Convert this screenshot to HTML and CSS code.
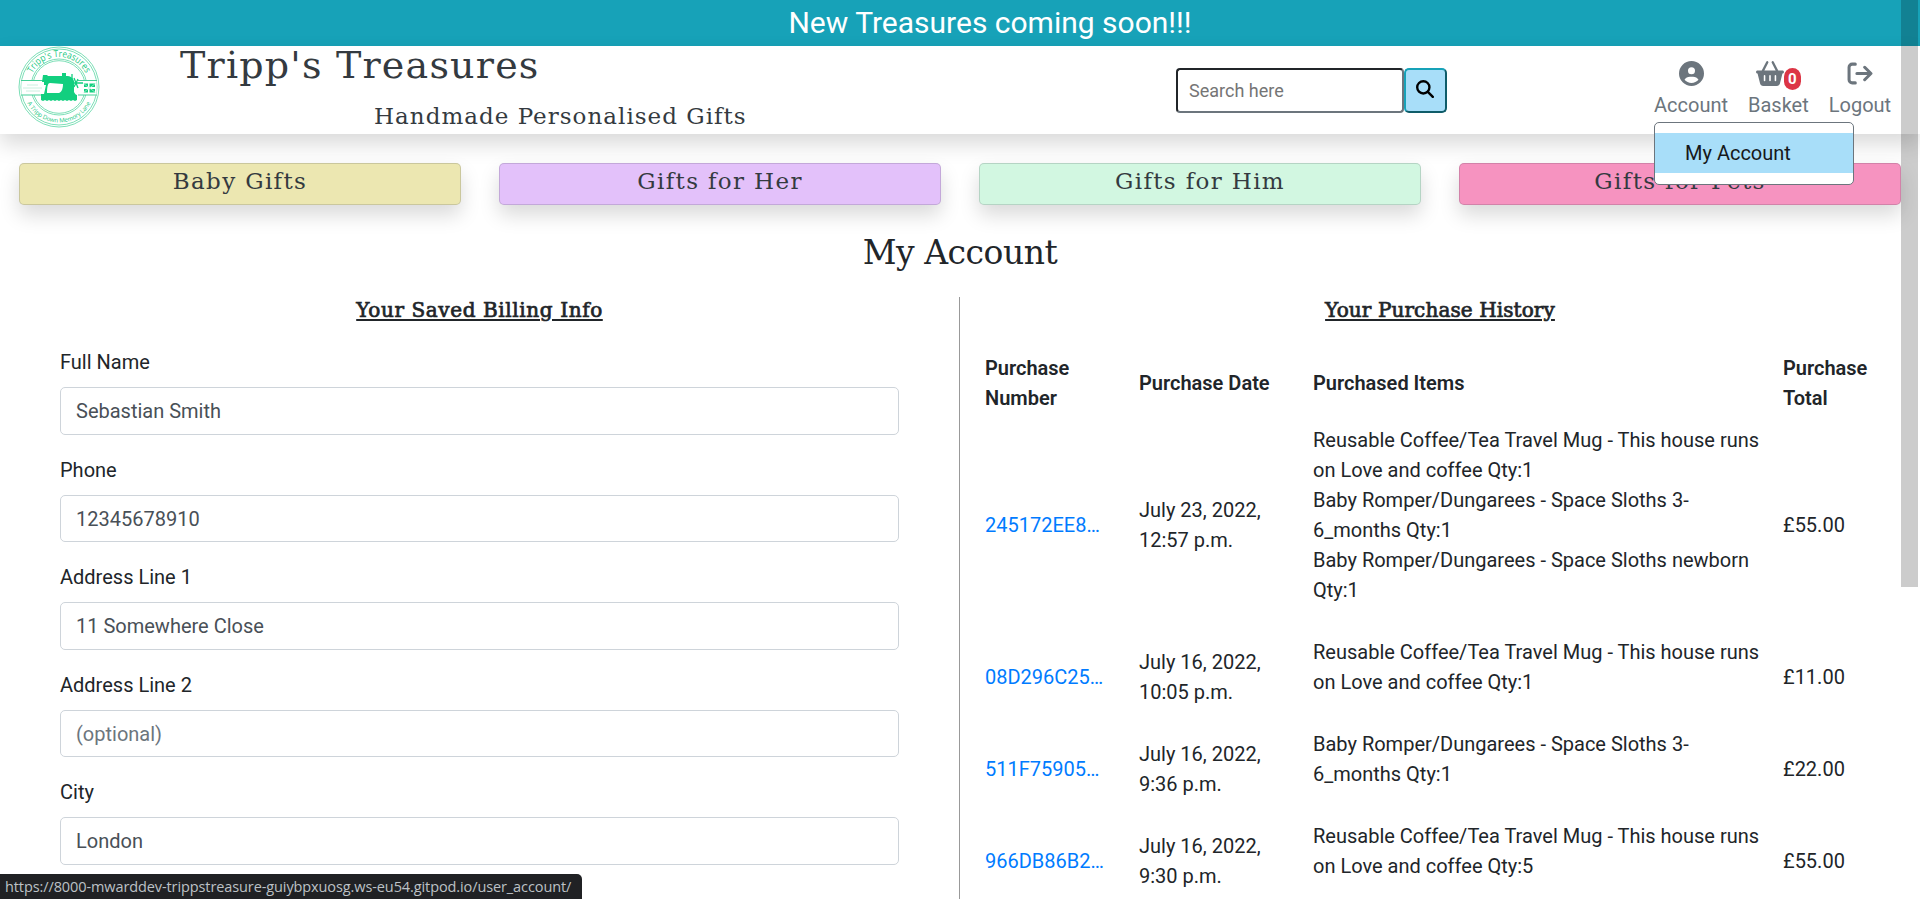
FILE: index.html
```html
<!DOCTYPE html>
<html lang="en">
<head>
<meta charset="utf-8">
<title>Tripp's Treasures</title>
<link rel="stylesheet" href="styles.css">
</head>
<body>
<div class="banner"><span>New Treasures coming soon!!!</span></div>
<header class="header">
  <svg class="logo" viewBox="0 0 82 82">
    <defs>
      <path id="arc-top" d="M11 41a30 30 0 0 1 60 0"/>
      <path id="arc-bottom" d="M5.500 41a35.500 35.500 0 0 0 71 0"/>
    </defs>
    <g fill="none" stroke="#5ad6a3" stroke-width=".8">
      <circle cx="41" cy="41" r="40"/>
      <circle cx="41" cy="41" r="38"/>
      <circle cx="41" cy="41" r="28"/>
      <circle cx="41" cy="41" r="26.300"/>
    </g>
    <path d="M3.500 34.500H26V49H3.500zM58 34.500h20.500V49H58z" fill="#fff"/>
    <path d="M3 34.500h22M3 49h20M60 34.500h19M60 49h19" stroke="#45cf97" stroke-width="1.200"/>
    <text class="logo-name"><textPath href="#arc-top" startOffset="50%" text-anchor="middle" textLength="66" lengthAdjust="spacingAndGlyphs">Tripp's Treasures</textPath></text>
    <text class="logo-tag"><textPath href="#arc-bottom" startOffset="50%" text-anchor="middle" textLength="78" lengthAdjust="spacingAndGlyphs">A Tripp Down Memory Lane</textPath></text>
    <path fill="#12cf7f" fill-rule="evenodd" d="M25 29h4l1 1h14v-3h4v3c5 0 7 2 8 5v11c1 2 2 3 3 3v5l-2 1-2-1-2 1-2-1-2 1-2-1-2 1-2-1-2 1-2-1-2 1-2-1-2 1-2-1-2 1-2-1-2 1-2-1v-6h3l2-9h-2v-3h-2zM32 37c-2 0-3 3-3 10h12c3-1 4-5 4-9z"/>
    <path d="M54 28v15M51 37h14M56 32l4 10M60 33l-4 8" stroke="#12cf7f" stroke-width="1.300" fill="none"/>
    <path d="M66 37.500h4v3.500h-4zM71.500 37.500h5.500v3.500h-5.500zM66 43h4v3.500h-4zM71.500 43h5.500v3.500h-5.500z" fill="#12cf7f"/>
    <path d="M65.500 37.500l12 9M77.500 37.500l-12 9" stroke="#b9f3da" stroke-width=".7"/>
    <path d="M9 39h11M5 42h19M8 45h14" stroke="#c5eedd" stroke-width=".9"/>
  </svg>
  <div class="brand">
    <div class="brand-name">Tripp's Treasures</div>
    <div class="brand-tag">Handmade Personalised Gifts</div>
  </div>
  <form class="search">
    <input class="search-input" type="text" placeholder="Search here">
    <button class="search-button" type="button" aria-label="Search">
      <svg viewBox="0 0 512 512" fill="none" stroke="#000" stroke-width="68" stroke-linecap="round"><circle cx="208" cy="208" r="174"/><path d="M338 338l140 140"/></svg>
    </button>
  </form>
  <nav class="user-nav">
    <div class="nav-item account">
      <svg class="icon-user" viewBox="0 0 512 512"><path fill="currentColor" d="M399 384.200C376.900 345.800 335.400 320 288 320H224c-47.400 0-88.900 25.800-111 64.200c35.200 39.200 86.200 63.800 143 63.800s107.800-24.700 143-63.800zM0 256a256 256 0 1 1 512 0A256 256 0 1 1 0 256zm256 16a72 72 0 1 0 0-144 72 72 0 1 0 0 144z"/></svg>
      <span>Account</span>
      <div class="menu"><div class="menu-item">My Account</div></div>
    </div>
    <div class="nav-item">
      <div class="basket">
        <svg class="icon-basket" viewBox="0 0 576 512"><path fill="currentColor" d="M253.300 35.100c6.100-11.800 1.500-26.300-10.200-32.400s-26.300-1.500-32.400 10.200L117.600 192H32c-17.700 0-32 14.300-32 32s14.300 32 32 32L83.900 463.500C91 492 116.600 512 146 512H430c29.400 0 55-20 62.100-48.500L544 256c17.700 0 32-14.300 32-32s-14.300-32-32-32H458.400L365.300 12.900C359.200 1.200 344.700-3.400 332.900 2.700s-16.300 20.600-10.200 32.400L404.300 192H171.700L253.300 35.100zM192 304v96c0 8.800-7.200 16-16 16s-16-7.200-16-16V304c0-8.800 7.200-16 16-16s16 7.200 16 16zm96-16c8.800 0 16 7.200 16 16v96c0 8.800-7.200 16-16 16s-16-7.200-16-16V304c0-8.800 7.200-16 16-16zm128 16v96c0 8.800-7.200 16-16 16s-16-7.200-16-16V304c0-8.800 7.200-16 16-16s16 7.200 16 16z"/></svg><b class="badge">0</b>
      </div>
      <span>Basket</span>
    </div>
    <div class="nav-item">
      <svg class="icon-logout" viewBox="0 0 512 512" fill="none" stroke="currentColor" stroke-width="62" stroke-linecap="round" stroke-linejoin="round"><path d="M160 64H96a64 64 0 0 0-64 64v256a64 64 0 0 0 64 64h64M192 256H480M352 128l128 128-128 128"/></svg>
      <span>Logout</span>
    </div>
  </nav>
</header>
<div class="categories">
  <div class="category baby">Baby Gifts</div>
  <div class="category her">Gifts for Her</div>
  <div class="category him">Gifts for Him</div>
  <div class="category pets">Gifts for Pets</div>
</div>
<h1 class="title">My Account</h1>
<main class="columns">
  <section class="billing">
    <h2 class="heading wide"><span>Your Saved Billing Info</span></h2>
    <div class="field"><label>Full Name</label><input value="Sebastian Smith"></div>
    <div class="field"><label>Phone</label><input value="12345678910"></div>
    <div class="field"><label>Address Line 1</label><input value="11 Somewhere Close"></div>
    <div class="field"><label>Address Line 2</label><input placeholder="(optional)"></div>
    <div class="field"><label>City</label><input value="London"></div>
  </section>
  <section class="history">
    <h2 class="heading"><span>Your Purchase History</span></h2>
    <table class="purchases">
      <colgroup><col class="c1"><col class="c2"><col class="c3"><col class="c4"></colgroup>
      <thead><tr><th>Purchase<br>Number</th><th>Purchase Date</th><th>Purchased Items</th><th>Purchase<br>Total</th></tr></thead>
      <tbody>
        <tr><td><a>245172EE8…</a></td><td>July 23, 2022,<br>12:57 p.m.</td><td><p>Reusable Coffee/Tea Travel Mug - This house runs<br>on Love and coffee Qty:1<br>Baby Romper/Dungarees - Space Sloths 3-<br>6_months Qty:1<br>Baby Romper/Dungarees - Space Sloths newborn<br>Qty:1</p></td><td>£55.00</td></tr>
        <tr><td><a>08D296C25…</a></td><td>July 16, 2022,<br>10:05 p.m.</td><td><p>Reusable Coffee/Tea Travel Mug - This house runs<br>on Love and coffee Qty:1</p></td><td>£11.00</td></tr>
        <tr><td><a>511F75905…</a></td><td>July 16, 2022,<br>9:36 p.m.</td><td><p>Baby Romper/Dungarees - Space Sloths 3-<br>6_months Qty:1</p></td><td>£22.00</td></tr>
        <tr><td><a>966DB86B2…</a></td><td>July 16, 2022,<br>9:30 p.m.</td><td><p>Reusable Coffee/Tea Travel Mug - This house runs<br>on Love and coffee Qty:5</p></td><td>£55.00</td></tr>
      </tbody>
    </table>
  </section>
</main>
<div class="scroll-thumb"></div>
<div class="status-bar">https://8000-mwarddev-trippstreasure-guiybpxuosg.ws-eu54.gitpod.io/user_account/</div>
</body>
</html>
```
FILE: styles.css
```css
* { box-sizing: border-box; }
body {
  margin: 0;
  width: 1920px;
  height: 899px;
  overflow: hidden;
  position: relative;
  background: #fff;
  color: #212529;
  font: 20px/30px Roboto, sans-serif;
}
.banner {
  height: 46px;
  padding-left: 60px;
  background: #17a2b8;
  color: #fff;
  text-align: center;
  font-size: 30px;
  line-height: 45px;
}
.header {
  height: 88px;
  display: flex;
  padding-left: 18px;
  box-shadow: 0 10px 20px rgba(0, 0, 0, .15);
}
.logo { width: 82px; height: 82px; flex: none; }
.logo-name, .logo-tag { fill: #16c780; font-family: "Open Sans", sans-serif; }
.logo-name { font-size: 9.500px; }
.logo-tag { font-size: 6px; }
.brand {
  width: 995px;
  padding-left: 80px;
  color: #343a40;
  font-family: "DejaVu Serif", serif;
  white-space: nowrap;
}
.brand-name { font-size: 38px; line-height: 38px; letter-spacing: 1.200px; }
.brand-tag { padding: 16px 0 0 194px; font-size: 23px; line-height: 32px; letter-spacing: 1.020px; }
.search { width: 271px; height: 45px; margin: 22px 0 0 81px; display: flex; flex: none; }
.search-input {
  width: 228px;
  padding: 0 11px;
  border: 2px solid;
  border-color: #212529 #6c757d #6c757d #212529;
  border-radius: 4px;
  font: 18px Roboto, sans-serif;
}
.search-input::placeholder { color: #757575; }
.search-button {
  width: 43px;
  padding: 0 1px 4px 0;
  border: 2px solid;
  border-color: #17a2b8 #0f5c69 #0f5c69 #17a2b8;
  border-radius: 5px;
  background: #a8def9;
  display: flex;
  align-items: center;
  justify-content: center;
}
.search-button svg { width: 18px; height: 18px; }
.user-nav { display: flex; gap: 20px; margin: 15px 0 0 207px; color: #6c757d; }
.nav-item { display: flex; flex-direction: column; align-items: center; position: relative; }
.nav-item > span { margin-top: 4px; }
.icon-user { width: 25px; height: 25px; }
.basket { display: flex; height: 25px; }
.icon-basket { width: 28px; height: 25px; }
.badge {
  width: 17px;
  height: 22px;
  margin-top: 7px;
  border-radius: 9px;
  background: #dc3545;
  color: #fff;
  text-align: center;
  font-size: 15px;
  line-height: 22px;
}
.icon-logout { width: 26px; height: 25px; }
.menu {
  position: absolute;
  z-index: 2;
  left: 0;
  top: 61px;
  width: 200px;
  height: 63px;
  padding: 10px 0;
  background: #fff;
  border: 1px solid #6c757d;
  border-radius: 5px;
}
.menu-item { height: 40px; padding-left: 30px; background: #a8def9; color: #16181b; line-height: 40px; }
.categories { display: grid; grid-template-columns: repeat(4, 442px); gap: 38px; padding: 29px 0 0 19px; }
.category {
  height: 42px;
  border: 1px solid rgba(52, 58, 64, .18);
  border-radius: 5px;
  background-clip: border-box;
  box-shadow: 0 10px 20px rgba(0, 0, 0, .15);
  color: #343a40;
  text-align: center;
  font: 23px/34px "DejaVu Serif", serif;
  letter-spacing: 1.350px;
}
.baby { background-color: #ece7b1; }
.her { background-color: #e3c1fa; }
.him { background-color: #d2f7e1; }
.pets { background-color: #f693c0; }
.title {
  margin: 28px 0 0;
  text-align: center;
  font: 33px/40px "DejaVu Serif", serif;
  letter-spacing: -.5px;
}
.columns { display: flex; height: 602px; margin-top: 24px; }
.billing { width: 960px; padding: 0 60px; border-right: 1px solid #999; }
.history { width: 960px; padding-left: 19px; }
.heading {
  margin: 0 0 23px;
  text-align: center;
  font: 20px/27px "DejaVu Serif", serif;
  -webkit-text-stroke: .7px #212529;
  text-decoration: underline;
  text-decoration-thickness: 2px;
  text-underline-offset: 2px;
  letter-spacing: .1px;
}
.wide { letter-spacing: .6px; }
.history .heading { padding-right: 19px; }
.field { margin-bottom: 20px; }
.field label { display: block; margin-bottom: 10px; }
.field input {
  display: block;
  width: 100%;
  height: 47.500px;
  padding: 1px 15px 0;
  border: 1px solid #ced4da;
  border-radius: 5px;
  color: #495057;
  font: 20px Roboto, sans-serif;
}
.field input::placeholder { color: #6c757d; }
.purchases { width: 922px; table-layout: fixed; border-collapse: collapse; white-space: nowrap; }
.c1 { width: 154px; }
.c2 { width: 174px; }
.c3 { width: 470px; }
.c4 { width: 124px; }
.purchases th, .purchases td { padding: 6px; text-align: left; vertical-align: middle; }
.purchases th { font-weight: 600; }
.purchases p { margin: 0 0 20px; }
.purchases a { color: #007bff; }
.scroll-thumb { position: absolute; z-index: 3; top: 0; left: 1901px; width: 17px; height: 587px; background: rgba(0, 0, 0, .2); }
.status-bar {
  position: absolute;
  left: 0;
  bottom: 0;
  width: 582px;
  height: 25px;
  padding-left: 5px;
  border-top-right-radius: 5px;
  background: #202124;
  color: #bdc1c6;
  font: 14.500px/26px "Open Sans", sans-serif;
  letter-spacing: -.1px;
  white-space: nowrap;
}
```
